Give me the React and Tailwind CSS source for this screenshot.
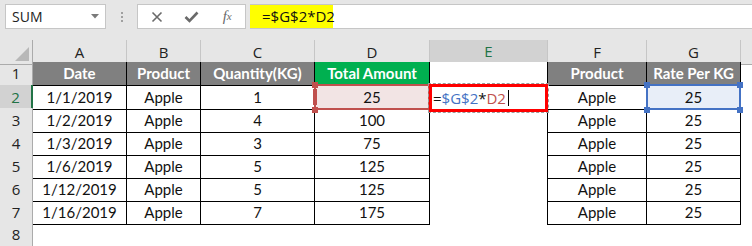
import React from "react";

const COLS = "grid grid-cols-[33px_94px_74px_114px_115px_118px_99px_94px_11px]";
const CELL_FONT = { fontFamily: "Lato, 'Open Sans', sans-serif" };
const UI_FONT = { fontFamily: "'Open Sans', 'Noto Sans', sans-serif" };

const data = [
  ["1/1/2019", "Apple", "1", "25"],
  ["1/2/2019", "Apple", "4", "100"],
  ["1/3/2019", "Apple", "3", "75"],
  ["1/6/2019", "Apple", "5", "125"],
  ["1/12/2019", "Apple", "5", "125"],
  ["1/16/2019", "Apple", "7", "175"],
];

function Sq({ className }) {
  return <div className={"absolute w-[6px] h-[6px] " + className} />;
}

function FormulaBar() {
  return (
    <div className="h-[40px] bg-[#e6e6e6] flex items-start pt-[4px] pl-[5px]" style={UI_FONT}>
      <div className="w-[101px] h-[25px] bg-white border border-[#c6c6c6] flex items-center justify-between pl-[6px] pr-[6px] text-[14px] text-[#222]">
        <span>SUM</span>
        <svg width="8" height="5" viewBox="0 0 8 5"><polygon points="0,0 8,0 4,4.5" fill="#7a7a7a" /></svg>
      </div>
      <div className="w-[31px] h-[25px] flex flex-col items-center justify-center gap-[2px]">
        <div className="w-[2px] h-[2px] bg-[#a0a0a0]" />
        <div className="w-[2px] h-[2px] bg-[#a0a0a0]" />
        <div className="w-[2px] h-[2px] bg-[#a0a0a0]" />
      </div>
      <div className="w-[109px] h-[25px] bg-white border border-[#c6c6c6] flex items-center">
        <div className="w-[36px] flex justify-center pl-[2px]">
          <svg width="12" height="12" viewBox="0 0 12 12">
            <path d="M1.5 1.5 L10.5 10.5 M10.5 1.5 L1.5 10.5" stroke="#6a6a6a" strokeWidth="1.6" />
          </svg>
        </div>
        <div className="w-[36px] flex justify-center">
          <svg width="15" height="12" viewBox="0 0 15 12">
            <path d="M1.5 6 L5.5 10 L13.5 1.5" stroke="#6a6a6a" strokeWidth="2.6" fill="none" />
          </svg>
        </div>
        <div className="w-[36px] flex justify-center text-[#6a6a6a] italic text-[15px] leading-none" style={{ fontFamily: "'Liberation Serif', serif" }}>
          f<span className="text-[11px] relative top-[2px]">x</span>
        </div>
      </div>
      <div className="ml-[4px] flex-1 h-[25px] bg-white border-y border-[#c6c6c6] flex items-stretch">
        <div className="w-[83px] bg-[#ffff00] flex items-center pl-[12px] text-[15px] text-[#111]">=$G$2*D2</div>
      </div>
    </div>
  );
}

function ColHeaders() {
  const letters = ["A", "B", "C", "D", "E", "F", "G"];
  return (
    <div className={COLS + " h-[22px]"} style={UI_FONT}>
      <div className="bg-[#e6e6e6] border-r border-b border-[#ababab] relative flex items-end justify-end p-[3px]">
        <svg width="14" height="14" viewBox="0 0 14 14"><polygon points="14,0 14,14 0,14" fill="#b8b8b8" /></svg>
      </div>
      {letters.map((l) =>
        l === "E" ? (
          <div key={l} className="bg-[#d2d2d2] border-r border-[#c6c6c6] border-b-2 border-b-[#217346] flex items-center justify-center text-[15px] text-[#217346]">
            {l}
          </div>
        ) : (
          <div key={l} className="bg-[#e6e6e6] border-r border-[#c6c6c6] border-b border-b-[#ababab] flex items-center justify-center text-[15px] text-[#222]">
            {l}
          </div>
        )
      )}
      <div className="bg-[#e6e6e6] border-b border-[#ababab]" />
    </div>
  );
}

function RowHeader({ n }) {
  if (n === 2)
    return (
      <div className="bg-[#d2d2d2] border-r-2 border-[#217346] border-b border-b-[#c6c6c6] flex items-center justify-center text-[15px] text-[#217346]" style={UI_FONT}>
        {n}
      </div>
    );
  return (
    <div className="bg-[#e6e6e6] border-r border-[#ababab] border-b border-b-[#d0d0d0] flex items-center justify-center text-[15px] text-[#222]" style={UI_FONT}>
      {n}
    </div>
  );
}

export default function App() {
  return (
    <div className="w-[752px] h-[246px] overflow-hidden bg-white">
      <FormulaBar />
      <ColHeaders />
      <div style={CELL_FONT} className="text-[15px] text-[#111]">
        {/* Row 1 */}
        <div className={COLS + " h-[23px]"}>
          <RowHeader n={1} />
          <div className="bg-[#808080] border-r border-b border-black flex items-center justify-center font-bold text-white">Date</div>
          <div className="bg-[#808080] border-r border-b border-black flex items-center justify-center font-bold text-white">Product</div>
          <div className="bg-[#808080] border-r border-b border-black flex items-center justify-center font-bold text-white">Quantity(KG)</div>
          <div className="bg-[#00b050] border-r border-b border-black flex items-center justify-center font-bold text-white">Total Amount</div>
          <div className="bg-white border-r border-black" />
          <div className="bg-[#808080] border-r border-b border-black flex items-center justify-center font-bold text-white">Product</div>
          <div className="bg-[#808080] border-r border-b border-black flex items-center justify-center font-bold text-white">Rate Per KG</div>
          <div />
        </div>
        {data.map((r, i) => {
          const n = i + 2;
          return (
            <div key={n} className={COLS + " h-[23px]"}>
              <RowHeader n={n} />
              <div className="border-r border-b border-black flex items-center justify-center pt-[1px]">{r[0]}</div>
              <div className="border-r border-b border-black flex items-center justify-center pt-[1px]">{r[1]}</div>
              <div className="border-r border-b border-black flex items-center justify-center pt-[1px]">{r[2]}</div>
              {n === 2 ? (
                <div className="border-r border-b border-black relative bg-[#f2e4e4] flex items-center justify-center pt-[1px]">
                  <div className="absolute inset-[-1px] border-2 border-[#c0504d] pointer-events-none" />
                  <div className="absolute left-[-2px] top-[4px] bottom-[4px] w-[4px] bg-[#c0504d]" />
                  <Sq className="bg-[#c0504d] left-[-3px] top-[-3px]" />
                  <Sq className="bg-[#c0504d] left-[-3px] bottom-[-4px]" />
                  <span className="relative">{r[3]}</span>
                </div>
              ) : (
                <div className="border-r border-b border-black flex items-center justify-center pt-[1px]">{r[3]}</div>
              )}
              {n === 2 ? (
                <div className="border-r border-black relative">
                  <div className="absolute left-[-2px] right-[-2px] top-[-2px] bottom-[-3px] border border-dashed border-[#9a9a9a]">
                    <div className="w-full h-full border-[3px] border-[#ff0000] flex items-center pl-[1px] pt-[1px]">
                      <span style={UI_FONT} className="text-[15px] text-[#111]">=</span>
                      <span style={UI_FONT} className="text-[15px] text-[#4472c4]">$G$2</span>
                      <span style={UI_FONT} className="text-[15px] text-[#111]">*</span>
                      <span style={UI_FONT} className="text-[15px] text-[#c0504d]">D2</span>
                      <div className="w-[1px] h-[16px] bg-black ml-[2px]" />
                    </div>
                  </div>
                </div>
              ) : (
                <div className="border-r border-black" />
              )}
              <div className="border-r border-b border-black flex items-center justify-center pt-[1px]">Apple</div>
              {n === 2 ? (
                <div className="border-r border-b border-black relative bg-[#e8eef8] flex items-center justify-center pt-[1px]">
                  <div className="absolute inset-[-1px] border-2 border-[#4472c4] pointer-events-none" />
                  <Sq className="bg-[#4472c4] left-[-3px] top-[-3px]" />
                  <Sq className="bg-[#4472c4] right-[-3px] top-[-3px]" />
                  <Sq className="bg-[#4472c4] left-[-3px] bottom-[-4px]" />
                  <Sq className="bg-[#4472c4] right-[-3px] bottom-[-4px]" />
                  <span className="relative">25</span>
                </div>
              ) : (
                <div className="border-r border-b border-black flex items-center justify-center pt-[1px]">25</div>
              )}
              <div />
            </div>
          );
        })}
        <div className={COLS + " h-[23px]"}>
          <RowHeader n={8} />
        </div>
      </div>
    </div>
  );
}
